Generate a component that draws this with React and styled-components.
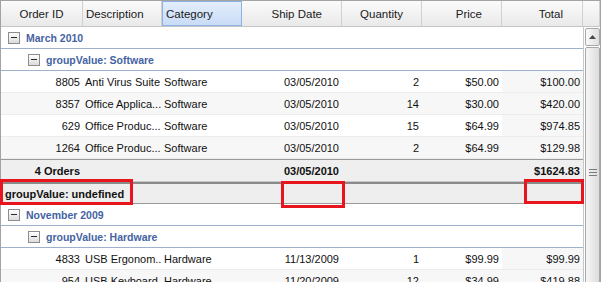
import React from "react";
import styled, { createGlobalStyle } from "styled-components";

const Global = createGlobalStyle`
  html, body { margin: 0; padding: 0; background: #fff; }
  body { font-family: "Liberation Sans", Arial, sans-serif; }
`;

const COLS = [
  { key: "id", label: "Order ID", w: 82, align: "right", hAlign: "center" },
  { key: "desc", label: "Description", w: 79, align: "left", hAlign: "left" },
  { key: "cat", label: "Category", w: 80, align: "left", hAlign: "left", active: true },
  { key: "date", label: "Ship Date", w: 100, align: "right", hAlign: "right" },
  { key: "qty", label: "Quantity", w: 80, align: "right", hAlign: "center" },
  { key: "price", label: "Price", w: 80, align: "right", hAlign: "right" },
  { key: "total", label: "Total", w: 81, align: "right", hAlign: "right" },
];
const TEMPLATE = COLS.map((c) => `${c.w}px`).join(" ");

const Page = styled.div`
  position: relative;
  width: 605px;
  height: 282px;
  overflow: hidden;
`;

const Grid = styled.div`
  width: 599px;
  border: 1px solid #a3a3a3;
  border-bottom: none;
  display: flex;
  flex-direction: column;
`;

const Header = styled.div`
  display: grid;
  grid-template-columns: ${TEMPLATE} 1fr;
  height: 25px;
  border-bottom: 1px solid #c5c5c5;
  background: linear-gradient(#fbfbfb, #e9e9e9);
`;

const HeadCell = styled.div`
  display: flex;
  align-items: center;
  justify-content: ${(p) => (p.$align === "center" ? "center" : p.$align === "right" ? "flex-end" : "flex-start")};
  padding: ${(p) => (p.$align === "right" ? "0 19px 0 0" : p.$align === "left" ? "0 0 0 3px" : "0")};
  font-size: 11.5px;
  color: #1a1a1a;
  border-right: 1px solid #d0d0d0;
  box-sizing: border-box;
  ${(p) =>
    p.$active &&
    `
    background: linear-gradient(#e3eefc, #c9dcf6);
    border: 1px solid #8fb2e6;
    padding-left: 3px;
  `}
`;

const Body = styled.div`
  display: flex;
`;

const Rows = styled.div`
  width: 582px;
  display: flex;
  flex-direction: column;
`;

const GroupRow = styled.div`
  height: 21px;
  display: flex;
  align-items: center;
  gap: 6px;
  padding-left: ${(p) => (p.$level === 2 ? 27 : 7)}px;
  border-bottom: 1px solid #9eb0cc;
  font-size: 10.5px;
  font-weight: bold;
  color: #4563a3;
  background: #fff;
`;

const Toggle = styled.span`
  width: 10px;
  height: 10px;
  border: 1px solid #8c8c8c;
  background: linear-gradient(#ffffff, #dcdcdc);
  display: flex;
  align-items: center;
  justify-content: center;
  &::after {
    content: "";
    width: 6px;
    height: 1px;
    background: #2a2a2a;
  }
`;

const DataRow = styled.div`
  display: grid;
  grid-template-columns: ${TEMPLATE};
  height: 21px;
  border-bottom: 1px solid #ececec;
  background: ${(p) => (p.$alt ? "#f7f7f7" : "#fff")};
`;

const Cell = styled.div`
  display: flex;
  align-items: center;
  justify-content: ${(p) => (p.$align === "right" ? "flex-end" : "flex-start")};
  padding: ${(p) => (p.$align === "right" ? "0 3px 0 0" : "0 0 0 2px")};
  font-size: 11px;
  color: #111;
  white-space: nowrap;
  overflow: hidden;
  background: ${(p) => (p.$shade ? "rgba(0,0,0,0.03)" : "transparent")};
`;

const SummaryRow = styled(DataRow)`
  border-top: 1px solid #9a9a9a;
  border-bottom: 1px solid #c8c8c8;
  background: #efefef;
  ${Cell} { font-weight: bold; }
`;

const UndefinedRow = styled.div`
  height: 19px;
  display: flex;
  align-items: center;
  padding-left: 4px;
  border-top: 2px solid #8a8a8a;
  border-bottom: 1px solid #9a9a9a;
  background: #eeeeee;
  font-size: 11px;
  font-weight: bold;
  color: #111;
`;

const ScrollCol = styled.div`
  width: 17px;
  border-left: 1px solid #c8c8c8;
  display: flex;
  flex-direction: column;
  gap: 1px;
  padding: 1px 0 0 1px;
  box-sizing: border-box;
`;

const ScrollBtn = styled.div`
  height: 16px;
  border: 1px solid #a8a8a8;
  border-radius: 2px;
  background: linear-gradient(to right, #fafafa, #dedede);
  display: flex;
  align-items: center;
  justify-content: center;
`;

const Thumb = styled.div`
  height: 260px;
  border: 1px solid #a8a8a8;
  border-radius: 2px;
  background: linear-gradient(to right, #f6f6f6, #dcdcdc);
  display: flex;
  flex-direction: column;
  align-items: center;
  padding-top: 121px;
  gap: 2px;
  box-sizing: border-box;
`;

const Grip = styled.span`
  width: 8px;
  height: 1px;
  background: #7a7a7a;
`;

const Mark = styled.div`
  position: absolute;
  border: 3px solid #e8141e;
  box-sizing: border-box;
`;

const groups = [
  {
    title: "March 2010",
    sub: "groupValue: Software",
    rows: [
      ["8805", "Anti Virus Suite", "Software", "03/05/2010", "2", "$50.00", "$100.00"],
      ["8357", "Office Applica...", "Software", "03/05/2010", "14", "$30.00", "$420.00"],
      ["629", "Office Produc...", "Software", "03/05/2010", "15", "$64.99", "$974.85"],
      ["1264", "Office Produc...", "Software", "03/05/2010", "2", "$64.99", "$129.98"],
    ],
    summary: ["4 Orders", "", "", "03/05/2010", "", "", "$1624.83"],
  },
];

const hardware = [
  ["4833", "USB Ergonom..", "Hardware", "11/13/2009", "1", "$99.99", "$99.99"],
  ["954", "USB Keyboard..", "Hardware", "11/20/2009", "12", "$34.99", "$419.88"],
];

const renderRow = (r, i) => (
  <DataRow key={i} $alt={i % 2 === 1}>
    {r.map((v, j) => (
      <Cell key={j} $align={COLS[j].align} $shade={j === 6 && i % 2 === 0}>
        {v}
      </Cell>
    ))}
  </DataRow>
);

export default function App() {
  const g = groups[0];
  return (
    <Page>
      <Global />
      <Grid>
        <Header>
          {COLS.map((c) => (
            <HeadCell key={c.key} $align={c.hAlign} $active={c.active}>
              {c.label}
            </HeadCell>
          ))}
          <HeadCell />
        </Header>
        <Body>
          <Rows>
            <GroupRow $level={1}>
              <Toggle />
              {g.title}
            </GroupRow>
            <GroupRow $level={2}>
              <Toggle />
              {g.sub}
            </GroupRow>
            {g.rows.map(renderRow)}
            <SummaryRow>
              {g.summary.map((v, j) => (
                <Cell key={j} $align={COLS[j].align}>
                  {v}
                </Cell>
              ))}
            </SummaryRow>
            <UndefinedRow>groupValue: undefined</UndefinedRow>
            <GroupRow $level={1}>
              <Toggle />
              November 2009
            </GroupRow>
            <GroupRow $level={2}>
              <Toggle />
              groupValue: Hardware
            </GroupRow>
            {hardware.map(renderRow)}
          </Rows>
          <ScrollCol>
            <ScrollBtn>
              <svg width="7" height="4" viewBox="0 0 7 4">
                <path d="M0 4 L3.5 0 L7 4 Z" fill="#4a4a4a" />
              </svg>
            </ScrollBtn>
            <Thumb>
              <Grip />
              <Grip />
              <Grip />
            </Thumb>
          </ScrollCol>
        </Body>
      </Grid>
      <Mark style={{ left: 0, top: 179, width: 133, height: 26 }} />
      <Mark style={{ left: 281, top: 181, width: 64, height: 27 }} />
      <Mark style={{ left: 524, top: 179, width: 60, height: 25 }} />
    </Page>
  );
}
